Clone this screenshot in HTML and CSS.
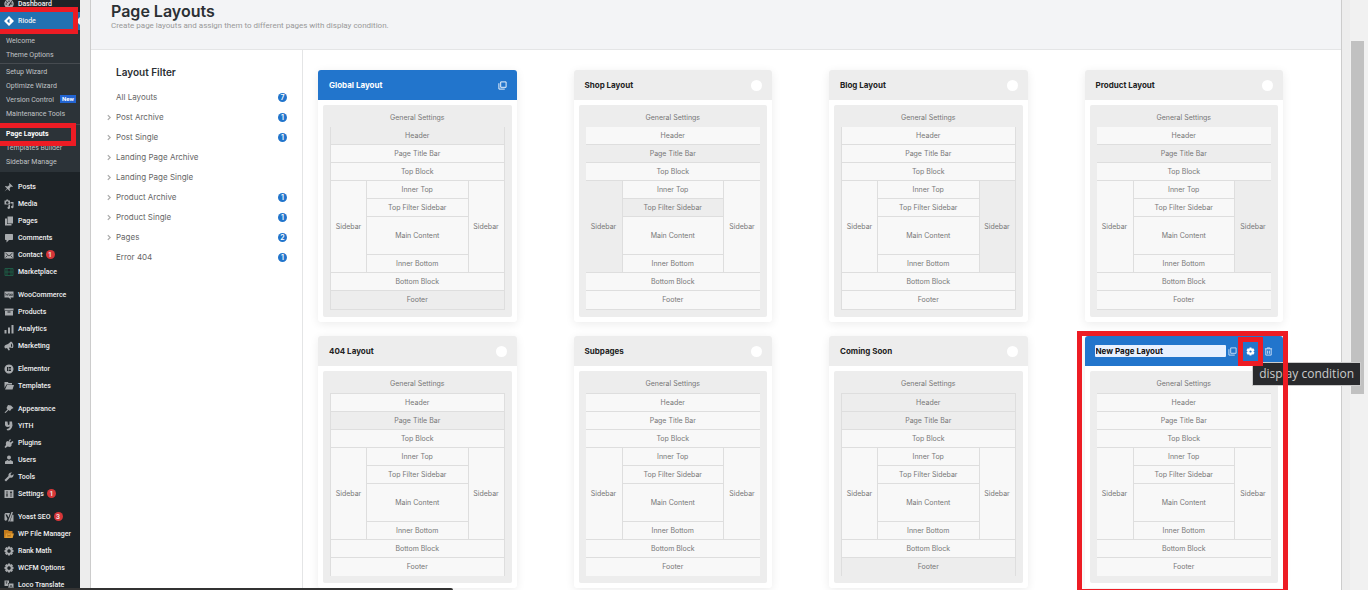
FILE: index.html
```html
<!DOCTYPE html>
<html lang="en">
<head>
<meta charset="utf-8">
<title>Page Layouts</title>
<link rel="stylesheet" href="styles.css">
</head>
<body>
<svg class="sprite" aria-hidden="true">
  <symbol id="dashboard" viewBox="0 0 20 20"><path fill-rule="evenodd" d="M10 1a9 9 0 0 1 7 15H3a9 9 0 0 1 7-15zM9 3v3h2V3zM3 9v2h3V9zm11 0v2h3V9zM5 4 4 6l3 2 1-1zm10 0-5 7-1 3 3-1 4-8z"/></symbol>
  <symbol id="riode" viewBox="0 0 20 20"><path fill-rule="evenodd" d="M10 0l10 10-10 10L0 10zM10 6l-4 4 4 4 2-2-2-2 2-2z"/></symbol>
  <symbol id="pin" viewBox="0 0 20 20"><path d="M11 2l7 7-2 1-2-1-3 4 1 4-1 1-4-4-6 5 5-6-4-4 1-1 4 1 4-3-1-2z"/></symbol>
  <symbol id="media" viewBox="0 0 20 20"><path fill-rule="evenodd" d="M1 3h3l1-2h3l1 2h3v8H1zm5.500 1.500a2.500 2.500 0 1 0 .1 0zM13 6h6v10a2.500 2.500 0 1 1-2-2.500V9h-4zM9 12h3v5a2.500 2.500 0 1 1-3-2z"/></symbol>
  <symbol id="pages" viewBox="0 0 20 20"><path d="M7 1h11v14H7z"/><path d="M2 5h4v11h9v3H2z"/></symbol>
  <symbol id="comment" viewBox="0 0 20 20"><path d="M3 2h14l1 1v10l-1 1h-7l-5 5v-5H3l-1-1V3z"/></symbol>
  <symbol id="mail" viewBox="0 0 20 20"><path d="M1 4h18v13H1z"/><path d="M3 6l7 6 7-6M3 15l4-4m10 4-4-4" fill="none" stroke="#1d2327" stroke-width="1.500"/></symbol>
  <symbol id="market" viewBox="0 0 20 20"><g fill="none" stroke="#1f5a45" stroke-width="2"><path d="M2 3h16v14H2zM6 3v14M14 3v14M2 10h16"/></g></symbol>
  <symbol id="woo" viewBox="0 0 20 20"><path d="M1 3h18v12h-6l1 4-5-4H1z"/><path d="M3 6l1 5 2-3 1 3 2-5m1 2h3v3h-3zm4 0h3v3h-3z" fill="none" stroke="#1d2327"/></symbol>
  <symbol id="box" viewBox="0 0 20 20"><path fill-rule="evenodd" d="M1 3h18v4H1zm1 5h16v9H2zm5 1v2h6V9z"/></symbol>
  <symbol id="bars" viewBox="0 0 20 20"><path d="M1 12h4v7H1zM8 7h4v12H8zM15 2h4v17h-4z"/></symbol>
  <symbol id="horn" viewBox="0 0 20 20"><path fill-rule="evenodd" d="M14 1c4 2 6 8 4 13l-7-1-1 1 2 4-3 1-3-5-3 1C0 14 0 9 3 8l5-2zm0 4v6l2 1c1-3 0-6-2-7z"/></symbol>
  <symbol id="elementor" viewBox="0 0 20 20"><path fill-rule="evenodd" d="M10 1a9 9 0 1 1-.1 0zM6 6v8h2V6zm3 0v2h5V6zm0 3v2h5V9zm0 3v2h5v-2z"/></symbol>
  <symbol id="folder" viewBox="0 0 20 20"><path d="M1 2h7l1 2h7v3H5l-4 7z"/><path d="M6 8h14l-3 9H2z"/></symbol>
  <symbol id="brush" viewBox="0 0 20 20"><path d="M8 2l6 1 5 5-4 2-3 4-3-2-6 6-2-1 6-6-2-3z"/></symbol>
  <symbol id="yith" viewBox="0 0 20 20"><path d="M2 1h5l1 7 3-1V1h5l1 8c-1 6-5 10-10 10l-2-3c4 0 6-2 7-5-5 2-9 1-10-3z"/></symbol>
  <symbol id="plug" viewBox="0 0 20 20"><path d="M12 2l2 2-3 3 2 2 4-3 2 2-4 4c1 3-1 5-3 6l-5-1-4 3-2-2 3-4c-1-4 0-7 3-8l2 1z"/></symbol>
  <symbol id="user" viewBox="0 0 20 20"><circle cx="10" cy="5" r="4"/><path d="M2 18v-5l5-3 3 2 3-2 5 3v5z"/></symbol>
  <symbol id="wrench" viewBox="0 0 20 20"><path d="M17 6l2-2c1 5-3 9-7 7l-8 8-3-3 8-8c-1-5 3-8 7-7l-3 3 1 3z"/></symbol>
  <symbol id="sliders" viewBox="0 0 20 20"><path d="M1 2h18v16H1z"/><path d="M6 4v12M14 4v12M4 12h4M12 7h4" stroke="#1d2327" stroke-width="1.500"/></symbol>
  <symbol id="yoast" viewBox="0 0 20 20"><path d="M3 2h9l-3 9-3-6H3l4 9-3 4-3-2V4zm12-2h3l-7 19H8zM17 5l2 1v13h-7z"/></symbol>
  <symbol id="files" viewBox="0 0 20 20"><path d="M0 2h8l2 2h7v14H0z" fill="#c27a1c"/><path d="M4 9h16l-3 9H2z" fill="#e09b32"/><path d="M7 11l1 4 2-3 2 3 1-4" fill="none" stroke="#8a5512"/></symbol>
  <symbol id="gear" viewBox="0 0 20 20"><path fill-rule="evenodd" d="M8 1h4l.5 2.500L15 2l3 3-1.500 2.500L19 8v4l-2.500.5L18 15l-3 3-2.500-1.500L12 19H8l-.5-2.500L5 18l-3-3 1.500-2.500L1 12V8l2.500-.5L2 5l3-3 2.500 1.500zm2 5.500a3.500 3.500 0 1 0 .1 0z"/></symbol>
  <symbol id="cog" viewBox="0 0 20 20"><path fill-rule="evenodd" d="M8 1h4l1 3 3-1 3 4-2.500 3 2.500 3-3 4-3-1-1 3H8l-1-3-3 1-3-4 2.500-3L1 7l3-4 3 1zm2 6.500a2.500 2.500 0 1 0 .1 0z"/></symbol>
  <symbol id="translate" viewBox="0 0 20 20"><path d="M1 1h9v5H8v6H1z"/><path d="M9 7h10v12H9z"/><path d="M3 4h4M5 3v5M11 16l3-6 3 6m-5-2h4" fill="none" stroke="#1d2327"/></symbol>
  <symbol id="copy" viewBox="0 0 20 20"><path d="M6 2h12v12H6z" fill="none" stroke="currentColor" stroke-width="2"/><path d="M2 5v13h13" fill="none" stroke="currentColor" stroke-width="2"/></symbol>
  <symbol id="trash" viewBox="0 0 20 20"><path d="M2 4h16M7 4V2h6v2M4 4v14h12V4M8 8v7m4-7v7" fill="none" stroke="currentColor" stroke-width="2"/></symbol>
  <symbol id="chevron" viewBox="0 0 10 10"><path d="M3 1l4 4-4 4" fill="none" stroke="currentColor" stroke-width="2"/></symbol>
</svg>

<div class="app">
  <nav class="admin-menu" aria-label="Admin menu">
    <a class="item" href="#"><svg><use href="#dashboard"/></svg>Dashboard</a>
    <a class="item current" href="#"><svg><use href="#riode"/></svg>Riode<span class="mark mark-item"></span></a>
    <div class="submenu">
      <a href="#">Welcome</a>
      <a href="#">Theme Options</a>
      <hr>
      <a href="#">Setup Wizard</a>
      <a href="#">Optimize Wizard</a>
      <a href="#">Version Control <span class="new">New</span></a>
      <a href="#">Maintenance Tools</a>
      <hr class="wide">
      <a class="active" href="#">Page Layouts<span class="mark mark-sub"></span></a>
      <a href="#">Templates Builder</a>
      <a href="#">Sidebar Manage</a>
    </div>
    <div class="group">
      <a class="item" href="#"><svg><use href="#pin"/></svg>Posts</a>
      <a class="item" href="#"><svg><use href="#media"/></svg>Media</a>
      <a class="item" href="#"><svg><use href="#pages"/></svg>Pages</a>
      <a class="item" href="#"><svg><use href="#comment"/></svg>Comments</a>
      <a class="item" href="#"><svg><use href="#mail"/></svg>Contact <span class="alert">1</span></a>
      <a class="item" href="#"><svg><use href="#market"/></svg>Marketplace</a>
    </div>
    <div class="group">
      <a class="item" href="#"><svg><use href="#woo"/></svg>WooCommerce</a>
      <a class="item" href="#"><svg><use href="#box"/></svg>Products</a>
      <a class="item" href="#"><svg><use href="#bars"/></svg>Analytics</a>
      <a class="item" href="#"><svg><use href="#horn"/></svg>Marketing</a>
    </div>
    <div class="group">
      <a class="item" href="#"><svg><use href="#elementor"/></svg>Elementor</a>
      <a class="item" href="#"><svg><use href="#folder"/></svg>Templates</a>
    </div>
    <div class="group">
      <a class="item" href="#"><svg><use href="#brush"/></svg>Appearance</a>
      <a class="item" href="#"><svg><use href="#yith"/></svg>YITH</a>
      <a class="item" href="#"><svg><use href="#plug"/></svg>Plugins</a>
      <a class="item" href="#"><svg><use href="#user"/></svg>Users</a>
      <a class="item" href="#"><svg><use href="#wrench"/></svg>Tools</a>
      <a class="item" href="#"><svg><use href="#sliders"/></svg>Settings<span class="alert">1</span></a>
    </div>
    <div class="group">
      <a class="item" href="#"><svg><use href="#yoast"/></svg>Yoast SEO <span class="alert">3</span></a>
      <a class="item" href="#"><svg><use href="#files"/></svg>WP File Manager</a>
      <a class="item" href="#"><svg><use href="#gear"/></svg>Rank Math</a>
      <a class="item" href="#"><svg><use href="#gear"/></svg>WCFM Options</a>
      <a class="item" href="#"><svg><use href="#translate"/></svg>Loco Translate</a>
    </div>
  </nav>

  <main class="page">
    <header class="page-head">
      <h1>Page Layouts</h1>
      <p>Create page layouts and assign them to different pages with display condition.</p>
    </header>
    <div class="columns">
      <aside class="filter">
        <h2>Layout Filter</h2>
        <a href="#"><span class="arrow"></span>All Layouts<b>7</b></a>
        <a href="#"><svg class="arrow"><use href="#chevron"/></svg>Post Archive<b>1</b></a>
        <a href="#"><svg class="arrow"><use href="#chevron"/></svg>Post Single<b>1</b></a>
        <a href="#"><svg class="arrow"><use href="#chevron"/></svg>Landing Page Archive</a>
        <a href="#"><svg class="arrow"><use href="#chevron"/></svg>Landing Page Single</a>
        <a href="#"><svg class="arrow"><use href="#chevron"/></svg>Product Archive<b>1</b></a>
        <a href="#"><svg class="arrow"><use href="#chevron"/></svg>Product Single<b>1</b></a>
        <a href="#"><svg class="arrow"><use href="#chevron"/></svg>Pages<b>2</b></a>
        <a href="#"><span class="arrow"></span>Error 404<b>1</b></a>
      </aside>
      <section class="cards" id="cards" aria-label="Layouts"></section>
    </div>
  </main>

  <div class="scrollbar"><div class="thumb"></div></div>
</div>
<div class="status-bar"></div>
<script src="app.js"></script>
</body>
</html>
```
FILE: styles.css
```css
* { box-sizing: border-box; }
body {
  margin: 0;
  height: 100vh;
  overflow: hidden;
  background: #ededed;
  font-family: Inter, "Open Sans", sans-serif;
}
a { color: inherit; text-decoration: none; }
button { padding: 0; border: 0; background: none; font: inherit; color: inherit; }
.sprite { position: absolute; width: 0; height: 0; }
.app {
  display: grid;
  grid-template-columns: 80px minmax(0, 1fr) 18px;
  column-gap: 8px;
  height: 100%;
}

/* Admin menu */
.admin-menu {
  margin-top: -5px;
  background: #1d2327;
  color: #f0f0f1;
  font-family: Roboto, "Noto Sans", sans-serif;
  font-size: 7px;
  font-weight: 500;
  white-space: nowrap;
}
.item { display: flex; align-items: center; height: 17px; padding-left: 4px; }
.item svg { flex: none; width: 10px; height: 10px; margin-right: 4px; fill: #a7aaad; }
.item.current { position: relative; height: 18px; background: #2271b1; }
.item.current svg { fill: #fff; }
.item.current::after {
  content: "";
  width: 0;
  margin-left: auto;
  border: 4px solid transparent;
  border-left: 0;
  border-right-color: #ededed;
}
.group { margin-top: 6px; }
.alert {
  display: grid;
  place-items: center;
  width: 9px;
  height: 9px;
  margin-left: 3px;
  border-radius: 50%;
  background: #d63638;
  font-size: 7px;
}
.submenu { padding: 4px 0 3px; background: #2c3338; color: #c0c3c6; font-weight: 400; }
.submenu a { display: flex; align-items: center; height: 14px; padding-left: 6px; }
.submenu hr { height: 1px; margin: 1px 0; border: 0; background: #464b50; }
.submenu hr.wide { margin: 3px 0 2px; }
.submenu .active { position: relative; color: #fff; font-weight: 700; }
.new { margin: -2px 0 0 6px; padding: 0 2px; background: #2264d1; color: #fff; font-size: 6px; font-weight: 700; line-height: 8px; }

/* Highlight frames */
.mark { position: absolute; z-index: 3; border: 5px solid #ed1c24; pointer-events: none; }
.mark-item { inset: -5px 2px -4px 0; border-left: 0; }
.mark-sub { inset: -4px 4px -5px 0; border-left: 0; }
.mark-card { inset: -5px -5px -6px -8px; }
.mark-tool { inset: -10px -8px; }

/* Page */
.page {
  position: relative;
  z-index: 1;
  display: flex;
  flex-direction: column;
  min-width: 0;
  margin-left: 2px;
  border: solid #ccc;
  border-width: 0 1px;
  background: #fff;
}
.page-head { padding: 1px 20px 18px; border-bottom: 1px solid #e4e5e6; background: #f3f4f6; }
h1 { margin: 0; color: #2b3034; font-size: 16px; line-height: 20px; font-weight: 600; }
.page-head p { margin: 0; color: #999; font: 8px/10px Roboto, sans-serif; }
.columns { display: grid; grid-template-columns: 212px minmax(0, 1fr); flex: 1; }

.filter { padding: 14px 15px 0; border-right: 1px solid #e4e5e6; color: #666; font-size: 8px; }
.filter h2 { margin: 0 0 7px 10px; color: #2b3034; font-size: 10px; line-height: 16px; font-weight: 600; }
.filter a { display: flex; align-items: center; height: 20px; }
.arrow { flex: none; width: 6px; height: 7px; margin-right: 4px; color: #aaa; }
.filter b {
  display: grid;
  place-items: center;
  width: 9px;
  height: 9px;
  margin-left: auto;
  border-radius: 50%;
  background: #2275cc;
  color: #fff;
  font-size: 7px;
  font-weight: 600;
}

/* Layout cards */
.cards {
  display: grid;
  grid-template-columns: repeat(4, minmax(0, 1fr));
  align-content: start;
  gap: 14px 57px;
  padding: 20px 58px 0 15px;
}
.card { position: relative; border-radius: 3px; background: #fff; box-shadow: 0 2px 10px rgba(0, 0, 0, 0.08); }
.card-head {
  display: flex;
  align-items: center;
  justify-content: space-between;
  height: 30px;
  padding: 0 10px 0 11px;
  border-radius: 3px 3px 0 0;
  background: #ededed;
  color: #222;
}
.card-head h3 { margin: 0; font-size: 8px; font-weight: 700; }
.card.blue .card-head { background: #2275cc; color: #fff; }
.card-head svg { display: block; width: 9px; height: 9px; fill: currentColor; }
.dot { width: 11px; height: 11px; border-radius: 50%; background: #fff; }
.name {
  flex: 1;
  min-width: 0;
  height: 12px;
  margin-right: 2px;
  padding: 0 1px;
  border: 0;
  border-radius: 1px;
  background: #e8f0fe;
  color: #111;
  font: 700 8px Inter, sans-serif;
}
.card.editing .card-head { padding: 0 10px; }
.tools { display: flex; gap: 9px; color: #cfe2f7; }
.tools button { position: relative; }
.tools .on { color: #fff; }
.tip {
  position: absolute;
  z-index: 2;
  top: 26px;
  right: -78px;
  padding: 0 6px;
  border: 1px solid #ccc;
  background: #292a2d;
  color: #ccc;
  font: 12px/22px "Open Sans", sans-serif;
  white-space: nowrap;
}
.card-body { padding: 5px; }
.wire {
  padding: 0 7px 7px;
  border-radius: 2px;
  background: #ededed;
  color: #777;
  font-size: 7px;
  line-height: 10px;
}
.wire .general { display: grid; place-items: center; width: 100%; height: 22px; padding-top: 3px; }
.table { border: solid #dedede; border-width: 0 0 1px; }
.table.lower { border-width: 1px 0 0; }
.table.sides { border-left-width: 1px; border-right-width: 1px; }
.cell { display: grid; place-items: center; width: 100%; height: 18px; background: #f8f8f8; border-bottom: 1px solid #dedede; }
.table > .cell:last-child { border-bottom: 0; }
.middle { display: grid; grid-template-columns: 36px minmax(0, 1fr) 36px; height: 92px; border-bottom: 1px solid #dedede; }
.sides .middle { grid-template-columns: 35px minmax(0, 1fr) 35px; }
.middle > .cell { height: 100%; border-bottom: 0; }
.inner { display: flex; flex-direction: column; border: solid #dedede; border-width: 0 1px; }
.inner .cell:last-child { height: 17px; border-bottom: 0; }
.inner .main { flex: 1; }
.cell.used { background: #ededed; }

/* Window scrollbar and status bubble */
.scrollbar { padding: 41px 4px 0 1px; background: #f1f1f1; }
.thumb { height: 353px; background: #c1c1c1; }
.status-bar {
  position: absolute;
  z-index: 4;
  left: 0;
  bottom: 0;
  width: 453px;
  height: 2px;
  border-radius: 0 2px 0 0;
  background: #333;
}
```
FILE: app.js
```js
const layouts = [
  { name: "Global Layout", blue: true, sides: true, used: ["Header", "Footer"] },
  { name: "Shop Layout", used: ["Page Title Bar", "Left", "Top Filter Sidebar"] },
  { name: "Blog Layout", sides: true, used: ["Right"] },
  { name: "Product Layout", used: ["Page Title Bar", "Right"] },
  { name: "404 Layout", lower: true, sides: true, used: ["Page Title Bar"] },
  { name: "Subpages", lower: true, used: [] },
  { name: "Coming Soon", lower: true, sides: true, used: ["Header", "Page Title Bar", "Footer"] },
  { name: "New Page Layout", lower: true, blue: true, editing: true, used: [] },
];

const icon = (id) => `<svg aria-hidden="true"><use href="#${id}"/></svg>`;

function cell(layout, label, key = label, extra = "") {
  const used = layout.used.includes(key) ? " used" : "";
  return `<button class="cell${used} ${extra}">${label}</button>`;
}

function head(layout) {
  if (layout.editing) {
    return `<input class="name" aria-label="Layout name" value="${layout.name}">
      <div class="tools">
        <button aria-label="Duplicate">${icon("copy")}</button>
        <button class="on" aria-label="Display condition">${icon("cog")}<span class="mark mark-tool"></span></button>
        <button aria-label="Delete">${icon("trash")}</button>
      </div>`;
  }
  const action = layout.blue
    ? `<button aria-label="Duplicate">${icon("copy")}</button>`
    : `<button class="dot" aria-label="Options"></button>`;
  return `<h3>${layout.name}</h3>${action}`;
}

function card(layout) {
  const c = (...args) => cell(layout, ...args);
  const flags = `${layout.blue ? " blue" : ""}${layout.editing ? " editing" : ""}`;
  const table = `${layout.lower ? " lower" : ""}${layout.sides ? " sides" : ""}`;
  return `<article class="card${flags}">
    <div class="card-head">${head(layout)}</div>
    <div class="card-body"><div class="wire">
      <button class="general">General Settings</button>
      <div class="table${table}">
        ${c("Header")}${c("Page Title Bar")}${c("Top Block")}
        <div class="middle">
          ${c("Sidebar", "Left")}
          <div class="inner">
            ${c("Inner Top")}${c("Top Filter Sidebar")}${c("Main Content", "Main Content", "main")}${c("Inner Bottom")}
          </div>
          ${c("Sidebar", "Right")}
        </div>
        ${c("Bottom Block")}${c("Footer")}
      </div>
    </div></div>
    ${layout.editing ? '<div class="tip" role="tooltip">display condition</div><span class="mark mark-card"></span>' : ""}
  </article>`;
}

document.getElementById("cards").innerHTML = layouts.map(card).join("");
```
